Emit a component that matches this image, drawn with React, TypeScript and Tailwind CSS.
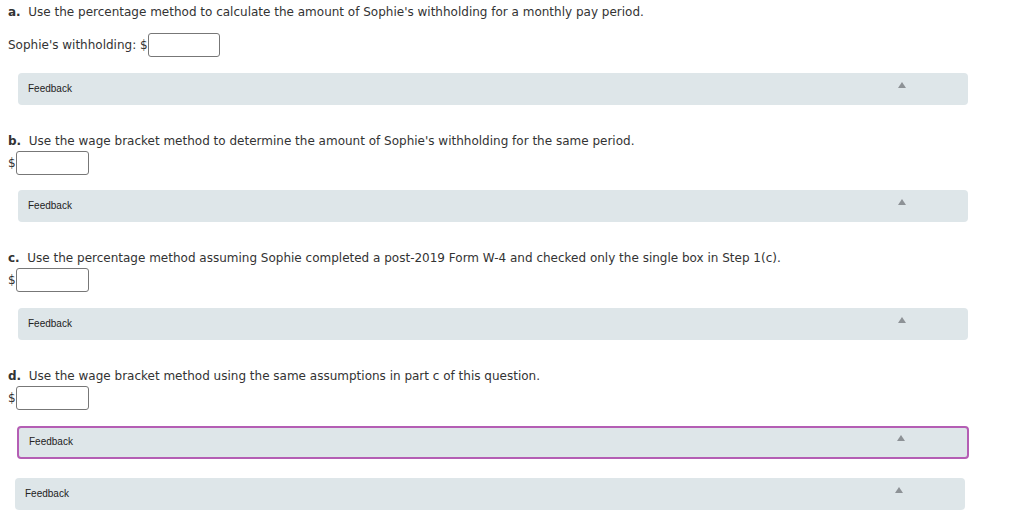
import React from 'react';

const body = "font-['DejaVu_Sans',Verdana,sans-serif] text-[12px] text-[#333]";

function Feedback({ active = false, className = '' }: { active?: boolean; className?: string }) {
  return (
    <div
      className={`flex h-8 items-center justify-between rounded-[4px] bg-[#dee6e9] pl-[10px] pr-[62px] font-['Liberation_Sans',Arial,sans-serif] text-[10px] text-[#222] ${
        active ? 'border-2 border-[#b45eb4] pl-[8px] pr-[60px]' : ''
      } ${className}`}
    >
      <span className="mb-[2px]">Feedback</span>
      <svg width="8" height="6" viewBox="0 0 8 6" className="mb-[9px]">
        <path d="M4 0 L8 6 L0 6 Z" fill="#8d9296" />
      </svg>
    </div>
  );
}

function Box({ w = 'w-[73px]' }: { w?: string }) {
  return <span className={`inline-block h-6 ${w} rounded-[3px] border border-[#777] bg-white`} />;
}

export default function App() {
  return (
    <div className={`${body} w-[1010px] h-[525px] bg-white pl-2 pt-[4px]`}>
      <p className="leading-4">
        <b>a.</b>&nbsp; Use the percentage method to calculate the amount of Sophie's withholding for a monthly pay period.
      </p>
      <div className="mt-[13px] flex items-center">
        <span>Sophie's withholding: $</span>
        <Box w="w-[72px]" />
      </div>
      <Feedback className="ml-[10px] mt-4 w-[950px]" />

      <p className="mt-[28px] leading-4">
        <b>b.</b>&nbsp; Use the wage bracket method to determine the amount of Sophie's withholding for the same period.
      </p>
      <div className="mt-[2px] flex items-center">
        <span>$</span>
        <Box />
      </div>
      <Feedback className="ml-[10px] mt-[15px] w-[950px]" />

      <p className="mt-[28px] leading-4">
        <b>c.</b>&nbsp; Use the percentage method assuming Sophie completed a post-2019 Form W-4 and checked only the single box in Step 1(c).
      </p>
      <div className="mt-[2px] flex items-center">
        <span>$</span>
        <Box />
      </div>
      <Feedback className="ml-[10px] mt-4 w-[950px]" />

      <p className="mt-[28px] leading-4">
        <b>d.</b>&nbsp; Use the wage bracket method using the same assumptions in part c of this question.
      </p>
      <div className="mt-[2px] flex items-center">
        <span>$</span>
        <Box />
      </div>
      <Feedback active className="ml-[9px] mt-4 w-[952px] h-[33px]" />

      <Feedback className="ml-[7px] mt-[19px] w-[950px]" />
    </div>
  );
}
